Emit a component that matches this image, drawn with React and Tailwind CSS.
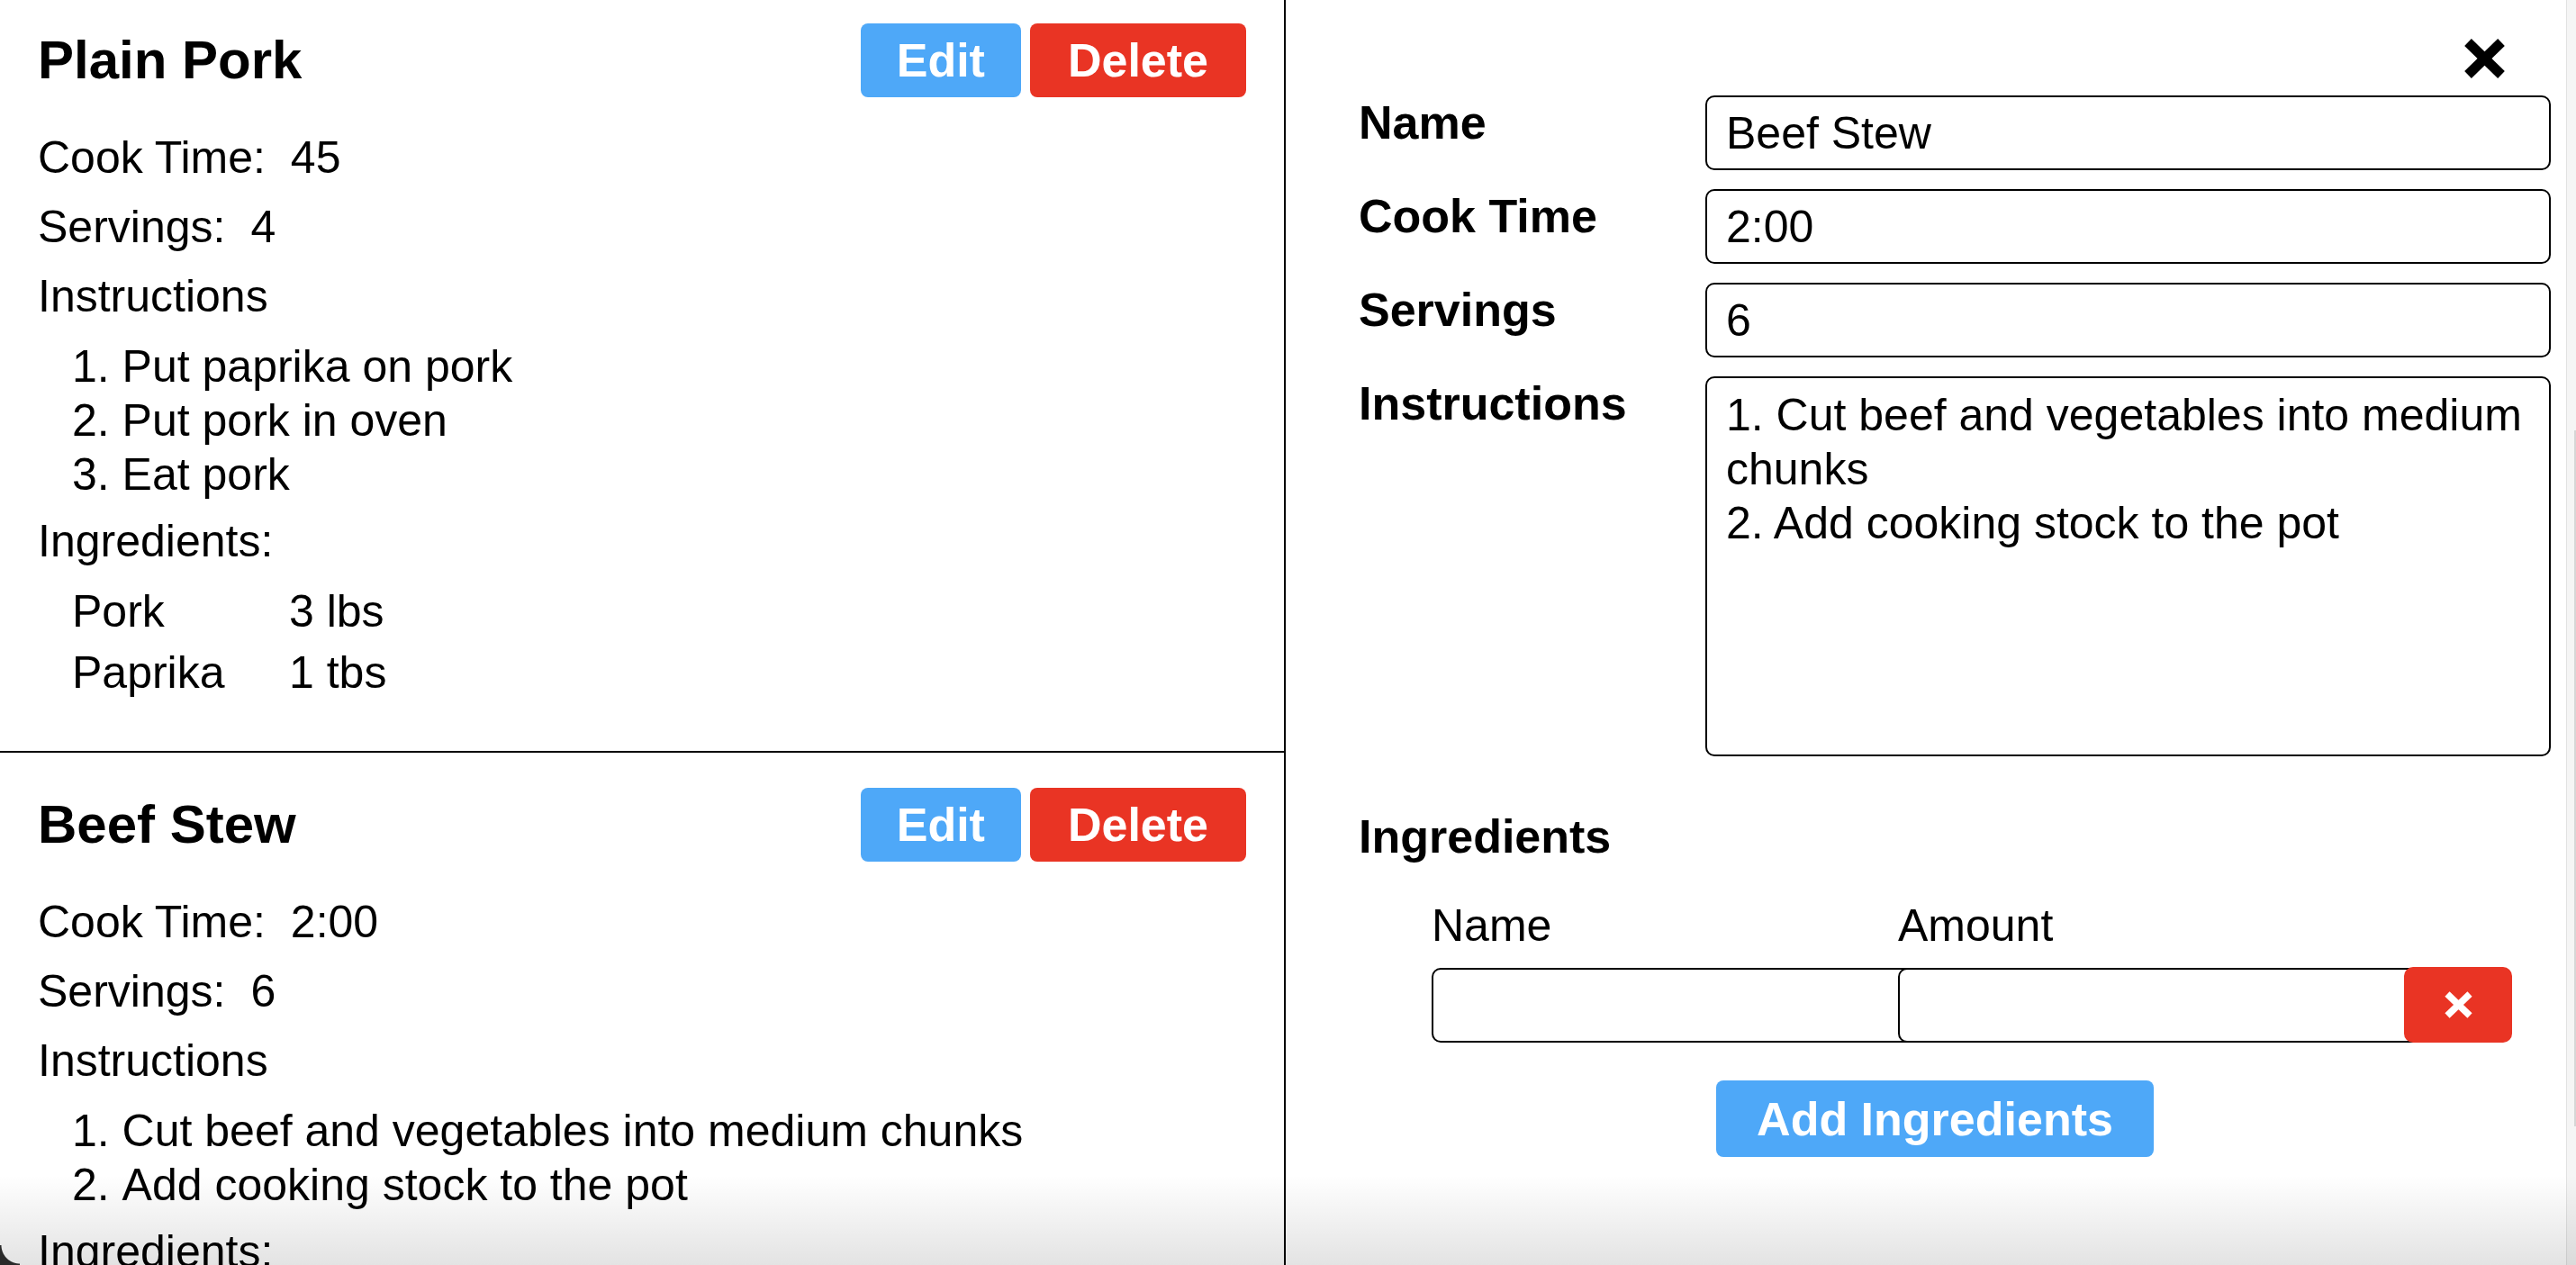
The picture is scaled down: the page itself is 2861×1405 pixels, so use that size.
import React from "react";

function CloseIcon({ className, stroke = 11 }) {
  return (
    <svg viewBox="0 0 45 44" className={className} aria-hidden="true">
      <line x1="4" y1="4" x2="41" y2="40" stroke="currentColor" strokeWidth={stroke} strokeLinecap="butt" />
      <line x1="41" y1="4" x2="4" y2="40" stroke="currentColor" strokeWidth={stroke} strokeLinecap="butt" />
    </svg>
  );
}

function RecipeCard({ title, cook, servings, instructions, ingredients, first }) {
  return (
    <div className={`border-b-2 border-black px-[42px] pt-[39px] pb-[53px] ${first ? "-mt-[13px]" : ""}`}>
      <div className="flex h-[82px] items-center justify-between">
        <h2 className="text-[60px] font-bold leading-[70px]">{title}</h2>
        <div className="flex gap-[10px]">
          <button className="h-[82px] rounded-[8px] bg-[#4ea8f8] px-[40px] text-[52px] font-bold leading-none text-white">
            Edit
          </button>
          <button className="h-[82px] rounded-[8px] bg-[#e93424] px-[42px] text-[52px] font-bold leading-none text-white">
            Delete
          </button>
        </div>
      </div>
      <div className="mt-[37px] text-[50px] leading-[60px]">
        <p>
          Cook Time:<span className="ml-[28px]">{cook}</span>
        </p>
        <p className="mt-[17px]">
          Servings:<span className="ml-[28px]">{servings}</span>
        </p>
        <p className="mt-[17px]">Instructions</p>
        <ol className="mt-[18px] list-inside list-decimal pl-[38px]">
          {instructions.map((s) => (
            <li key={s}>{s}</li>
          ))}
        </ol>
        <p className="mt-[14px]">Ingredients:</p>
        {ingredients.length > 0 && (
          <div className="mt-[14px] grid grid-cols-[241px_auto] pl-[38px] leading-[68px]">
            {ingredients.map(([n, a]) => (
              <React.Fragment key={n}>
                <div>{n}</div>
                <div>{a}</div>
              </React.Fragment>
            ))}
          </div>
        )}
      </div>
    </div>
  );
}

export default function App() {
  return (
    <div className="relative flex h-[1405px] w-full overflow-hidden bg-white font-['Liberation_Sans',Arial,sans-serif] text-black">
      {/* Left: recipe list */}
      <div className="h-full w-[1428px] shrink-0 overflow-hidden border-r-2 border-black">
        <RecipeCard
          first
          title="Plain Pork"
          cook="45"
          servings="4"
          instructions={["Put paprika on pork", "Put pork in oven", "Eat pork"]}
          ingredients={[
            ["Pork", "3 lbs"],
            ["Paprika", "1 tbs"],
          ]}
        />
        <RecipeCard
          title="Beef Stew"
          cook="2:00"
          servings="6"
          instructions={["Cut beef and vegetables into medium chunks", "Add cooking stock to the pot"]}
          ingredients={[]}
        />
      </div>

      {/* Right: edit form */}
      <div className="flex min-w-0 flex-1">
        <div className="min-w-0 flex-1 pl-[81px] pr-[17px] pt-[43px]">
          <div className="flex justify-end pr-[51px]">
            <button className="h-[44px] w-[45px] text-black" aria-label="Close">
              <CloseIcon className="h-[44px] w-[45px]" />
            </button>
          </div>

          <div className="mt-[19px] grid grid-cols-[385px_1fr] gap-y-[21px]">
            <label className="text-[52px] font-bold leading-[60px]">Name</label>
            <input
              className="h-[83px] w-full rounded-[10px] border-2 border-black px-[21px] text-[50px] outline-none"
              defaultValue="Beef Stew"
            />
            <label className="text-[52px] font-bold leading-[60px]">Cook Time</label>
            <input
              className="h-[83px] w-full rounded-[10px] border-2 border-black px-[21px] text-[50px] outline-none"
              defaultValue="2:00"
            />
            <label className="text-[52px] font-bold leading-[60px]">Servings</label>
            <input
              className="h-[83px] w-full rounded-[10px] border-2 border-black px-[21px] text-[50px] outline-none"
              defaultValue="6"
            />
            <label className="text-[52px] font-bold leading-[60px]">Instructions</label>
            <textarea
              className="block h-[422px] w-full resize-none overflow-hidden rounded-[10px] border-2 border-black px-[21px] pt-[11px] text-[50px] leading-[60px] outline-none"
              defaultValue={"1. Cut beef and vegetables into medium chunks\n2. Add cooking stock to the pot"}
            />
          </div>

          <h3 className="mt-[59px] text-[52px] font-bold leading-[60px]">Ingredients</h3>

          <div className="mt-[39px] grid grid-cols-[518px_auto] pl-[81px] text-[50px] leading-[60px]">
            <div>Name</div>
            <div>Amount</div>
          </div>

          <div className="mt-[16px] flex items-center pl-[81px]">
            <input className="h-[83px] w-[540px] shrink-0 rounded-[10px] border-2 border-black bg-white px-[21px] text-[50px] outline-none" />
            <input className="-ml-[22px] h-[83px] w-[600px] shrink-0 rounded-[10px] border-2 border-black bg-white px-[21px] text-[50px] outline-none" />
            <button
              className="-ml-[38px] flex h-[84px] w-[120px] shrink-0 items-center justify-center rounded-[10px] bg-[#e93424] text-white"
              aria-label="Remove ingredient"
            >
              <svg viewBox="0 0 31 30" className="h-[30px] w-[31px]" aria-hidden="true">
                <line x1="3" y1="3" x2="28" y2="27" stroke="currentColor" strokeWidth="7.5" />
                <line x1="28" y1="3" x2="3" y2="27" stroke="currentColor" strokeWidth="7.5" />
              </svg>
            </button>
          </div>

          <div className="mt-[42px] flex justify-center pr-[44px]">
            <button className="h-[85px] rounded-[8px] bg-[#4ea8f8] px-[45px] text-[52px] font-bold leading-none text-white">
              Add Ingredients
            </button>
          </div>
        </div>

        {/* scrollbar strip */}
        <div className="flex h-full w-[11px] shrink-0 flex-col border-l border-[#e2e2e2] bg-[#f5f5f5]">
          <div className="ml-auto mt-[478px] h-[773px] w-[2px] bg-[#d6d6d6]" />
        </div>
      </div>

      {/* window bottom shading */}
      <div className="pointer-events-none absolute inset-x-0 bottom-0 h-[100px] bg-linear-to-b from-transparent to-black/[0.11]" />
      <div className="pointer-events-none absolute bottom-0 left-0 h-[22px] w-[22px] bg-[radial-gradient(circle_at_100%_0%,transparent_20px,#2a2a2a_21px)]" />
    </div>
  );
}
